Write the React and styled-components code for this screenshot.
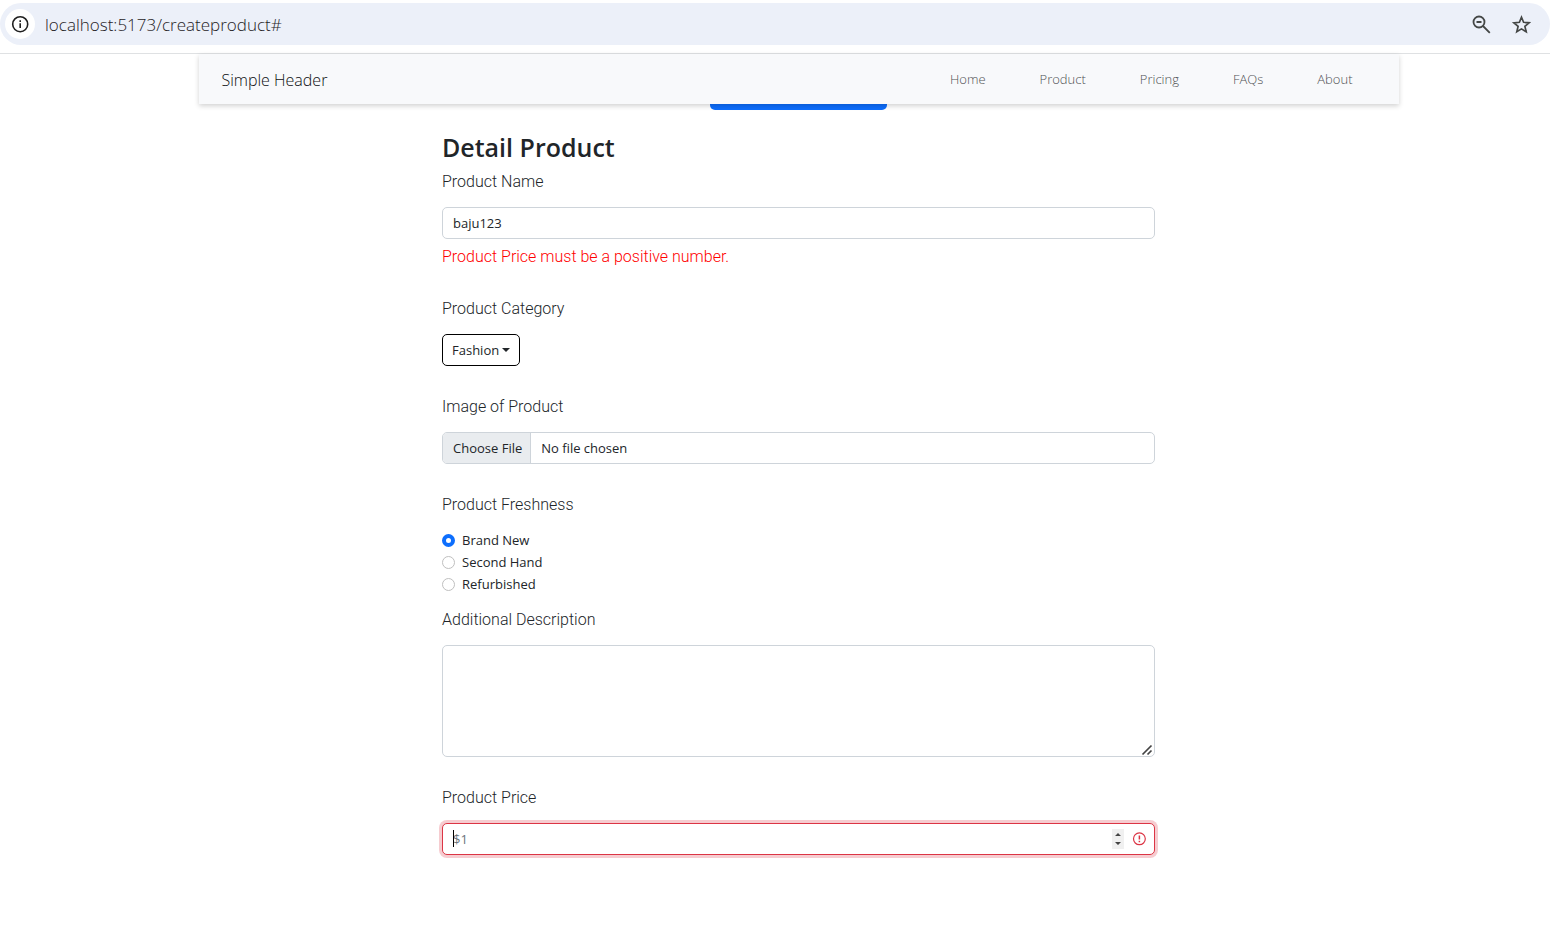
import React from "react";
import styled, { createGlobalStyle } from "styled-components";

const GlobalStyle = createGlobalStyle`
  *, *::before, *::after { box-sizing: border-box; }
  body {
    margin: 0;
    background: #fff;
    color: #212529;
    font-family: "Open Sans", "Noto Sans", sans-serif;
    font-size: 13px;
    line-height: 22px;
    overflow-x: hidden;
  }
  button, input, select, textarea { font: inherit; color: inherit; margin: 0; }
`;

const BrowserBar = styled.div`
  padding: 3px 0 8px;
  border-bottom: 1px solid #dfe1e3;
`;

const AddressField = styled.div`
  display: flex;
  align-items: center;
  height: 42px;
  padding: 0 16px 0 5px;
  border-radius: 21px;
  background: #ecf0f9;
`;

const IconButton = styled.button`
  display: flex;
  align-items: center;
  justify-content: center;
  flex: none;
  width: ${(p) => (p.$round ? 30 : 26)}px;
  height: ${(p) => (p.$round ? 30 : 26)}px;
  margin-left: ${(p) => (p.$round ? 0 : 14)}px;
  padding: 0;
  border: 0;
  border-radius: 50%;
  background: ${(p) => (p.$round ? "#fff" : "transparent")};
  color: #444746;
`;

const AddressInput = styled.input`
  flex: 1;
  min-width: 0;
  padding: 2px 10px 0;
  border: 0;
  outline: 0;
  background: transparent;
  color: #1f2226;
  font-size: 17px;
  font-weight: 300;
`;

const Page = styled.div`
  padding-left: 47px;
`;

const Header = styled.header`
  position: relative;
  z-index: 1;
  display: flex;
  align-items: center;
  justify-content: space-between;
  max-width: 1200px;
  height: 50px;
  margin: 0 auto;
  padding: 0 46px 0 23px;
  background: #f8f9fb;
  box-shadow: 0 2px 5px rgba(0, 0, 0, 0.18);
`;

const Brand = styled.a`
  padding-top: 2px;
  color: #0c0e10;
  font-size: 16px;
  font-weight: 300;
  line-height: 24px;
  text-decoration: none;
`;

const Nav = styled.nav`
  display: flex;
  gap: 54px;
`;

const NavLink = styled.a`
  color: #505254;
  font-weight: 300;
  text-decoration: none;
`;

const Main = styled.main`
  max-width: 713px;
  margin: 0 auto;
  padding-bottom: 75px;
`;

const PrimaryButton = styled.button`
  display: block;
  width: 177px;
  height: 32px;
  margin: -26px auto 0;
  border: 0;
  border-radius: 5px;
  background: #0d6efd;
`;

const Title = styled.h2`
  margin: 21px 0 7px;
  font-size: 25px;
  font-weight: 600;
  line-height: 32px;
`;

const Field = styled.div`
  margin-bottom: 29px;
`;

const Label = styled.label`
  display: block;
  width: fit-content;
  margin-bottom: 13px;
  font-family: Roboto, sans-serif;
  font-size: 16px;
  font-weight: 300;
  line-height: 24px;
`;

const RadioGroup = styled.fieldset`
  min-width: 0;
  margin: 0 0 13px;
  padding: 0;
  border: 0;
`;

const Legend = styled(Label).attrs({ as: "legend" })`
  margin-bottom: 12px;
  padding: 0;
`;

const Control = styled.input`
  display: block;
  width: 100%;
  height: 32px;
  padding: 0 10px;
  border: 1px solid #ced4da;
  border-radius: 5px;
  outline: 0;
  background: #fff;
`;

const FileControl = styled(Control)`
  padding: 0;
  line-height: 30px;
  overflow: hidden;

  &::file-selector-button {
    height: 30px;
    margin: 0 10px 0 0;
    padding: 0 8px 0 10px;
    border: 0;
    border-right: 1px solid #ced4da;
    background: #e9ecef;
    color: #212529;
    font: inherit;
  }
`;

const Overlaid = styled.div`
  position: relative;
`;

const TextArea = styled.textarea`
  display: block;
  width: 100%;
  height: 112px;
  padding: 5px 10px;
  border: 1px solid #ced4da;
  border-radius: 5px;
  outline: 0;
  resize: vertical;

  &::-webkit-resizer { background: transparent; }
`;

const Grip = styled.svg`
  position: absolute;
  right: 2px;
  bottom: 1px;
  pointer-events: none;
`;

const ErrorText = styled.p`
  margin: 7px 0 0;
  color: #f00;
  font-family: Roboto, sans-serif;
  font-size: 16px;
  font-weight: 300;
`;

const SelectWrap = styled.div`
  position: relative;
  width: 78px;
`;

const Select = styled.select`
  display: block;
  appearance: none;
  width: 100%;
  height: 32px;
  padding: 0 9px;
  border: 1px solid #000;
  border-radius: 5px;
  outline: 0;
  background: #fff;
`;

const SelectCaret = styled.span`
  position: absolute;
  top: 14px;
  right: 10px;
  border: 4px solid transparent;
  border-top-color: #212529;
  border-bottom: 0;
  pointer-events: none;
`;

const RadioRow = styled.label`
  display: flex;
  align-items: center;
  gap: 7px;
  width: fit-content;
`;

const Radio = styled.input`
  appearance: none;
  width: 13px;
  height: 13px;
  border: 1px solid #bfbfbf;
  border-radius: 50%;
  background: #fff;

  &:checked {
    border: 4px solid #0d6efd;
  }
`;

const PriceControl = styled(Control)`
  padding-right: 30px;
  border-color: #dc3545;
  box-shadow: 0 0 0 3px rgba(220, 53, 69, 0.25);
  caret-color: transparent;

  &::placeholder { color: #6c757d; opacity: 1; }
  &::-webkit-inner-spin-button { opacity: 0; }
`;

const TextCursor = styled.span`
  position: absolute;
  top: 7px;
  left: 11px;
  width: 1px;
  height: 17px;
  background: #000;
`;

const Spinner = styled.svg`
  position: absolute;
  top: 6px;
  right: 31px;
  pointer-events: none;
`;

const InvalidIcon = styled.svg`
  position: absolute;
  top: 9px;
  right: 9px;
`;

const links = ["Home", "Product", "Pricing", "FAQs", "About"];
const conditions = ["Brand New", "Second Hand", "Refurbished"];

export default function App() {
  return (
    <>
      <GlobalStyle />
      <BrowserBar>
        <AddressField>
          <IconButton $round aria-label="Site information">
            <svg width="18" height="18" viewBox="0 0 18 18" fill="none" stroke="#1f1f1f">
              <circle cx="9.2" cy="9.2" r="7.5" strokeWidth="1.6" />
              <path d="M9.2 8.2v4.8M9.2 5.2v1.7" strokeWidth="1.6" />
            </svg>
          </IconButton>
          <AddressInput aria-label="Address" defaultValue="localhost:5173/createproduct#" />
          <IconButton aria-label="Zoom">
            <svg width="20" height="20" viewBox="0 0 20 20" fill="none" stroke="currentColor" strokeWidth="1.8">
              <circle cx="8" cy="8" r="5.5" />
              <path d="M12 12L18.8 18.8M5.5 8h5" />
            </svg>
          </IconButton>
          <IconButton aria-label="Bookmark">
            <svg width="20" height="20" viewBox="0 0 20 20" fill="none" stroke="currentColor" strokeWidth="1.7">
              <path d="M10.5 3.2l2.1 5.1 5.5.5-4.2 3.6 1.3 5.4-4.7-2.9-4.7 2.9 1.3-5.4-4.2-3.6 5.5-.5z" />
            </svg>
          </IconButton>
        </AddressField>
      </BrowserBar>
      <Page>
        <Header>
          <Brand href="#">Simple Header</Brand>
          <Nav>
            {links.map((name) => (
              <NavLink href="#" key={name}>{name}</NavLink>
            ))}
          </Nav>
        </Header>
        <Main>
          <PrimaryButton type="button" aria-label="Submit" />
          <Title>Detail Product</Title>
          <form>
            <Field>
              <Label htmlFor="name">Product Name</Label>
              <Control id="name" type="text" defaultValue="baju123" />
              <ErrorText>Product Price must be a positive number.</ErrorText>
            </Field>
            <Field>
              <Label htmlFor="category">Product Category</Label>
              <SelectWrap>
                <Select id="category" defaultValue="Fashion">
                  <option>Fashion</option>
                </Select>
                <SelectCaret />
              </SelectWrap>
            </Field>
            <Field>
              <Label htmlFor="image">Image of Product</Label>
              <FileControl id="image" type="file" />
            </Field>
            <RadioGroup>
              <Legend>Product Freshness</Legend>
              {conditions.map((name, i) => (
                <RadioRow key={name}>
                  <Radio type="radio" name="freshness" value={name} defaultChecked={i === 0} />
                  {name}
                </RadioRow>
              ))}
            </RadioGroup>
            <Field>
              <Label htmlFor="description">Additional Description</Label>
              <Overlaid>
                <TextArea id="description" />
                <Grip width="12" height="12" viewBox="0 0 12 12" stroke="#444" strokeWidth="1.7">
                  <path d="M1.500 10.500L10.500 1.500M6.500 10.500L10.500 6.500" />
                </Grip>
              </Overlaid>
            </Field>
            <Field>
              <Label htmlFor="price">Product Price</Label>
              <Overlaid>
                <PriceControl id="price" type="number" placeholder="$1" aria-invalid="true" />
                <TextCursor />
                <Spinner width="12" height="20" viewBox="0 0 12 20">
                  <rect width="12" height="20" fill="#f0f0f0" />
                  <path d="M3 7l3-3 3 3zM3 13l3 3 3-3z" fill="#444" />
                </Spinner>
                <InvalidIcon width="14" height="14" viewBox="0 0 14 14" fill="none" stroke="#dc3545">
                  <circle cx="7.4" cy="6.8" r="5.9" strokeWidth="1.2" />
                  <path d="M7.4 3.4v4.2M7.4 8.800v1.500" strokeWidth="1.5" />
                </InvalidIcon>
              </Overlaid>
            </Field>
          </form>
        </Main>
      </Page>
    </>
  );
}
